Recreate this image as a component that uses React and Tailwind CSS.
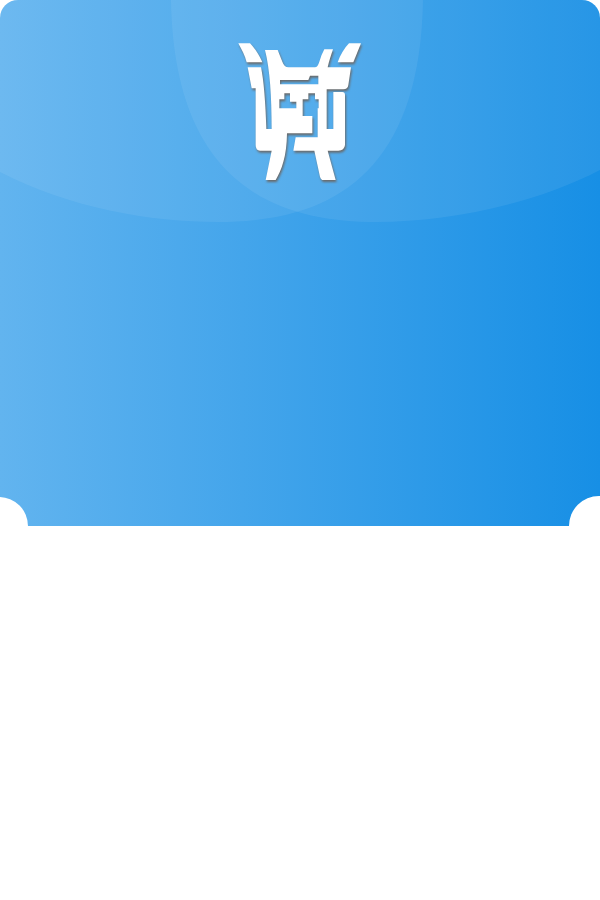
import React from "react";

const Logo = () => (
  <svg
    viewBox="0 0 450 480"
    className="w-[150px] h-[160px] drop-shadow-[1.5px_2px_1px_#6a6a6a]"
    fill="#ffffff"
  >
    {/* horns */}
    <path d="M40 40 H75 C90 55 104 78 112 97 H65 C60 75 50 60 40 40Z" />
    <path d="M372 40 H408 L385 97 H338 C345 75 358 55 372 40Z" />
    {/* body, traced clockwise, with the two inner holes */}
    <path
      fillRule="evenodd"
      d="M68 112 H108 C116 150 122 220 124 297 H140 C140 200 135 120 120 60 H158 L172 95 Q178 112 190 112 H270 Q278 112 283 95 Q290 72 298 58 H324 C318 75 312 95 308 112 H378 L370 165 Q368 178 355 178 H305 V297 H325 V186 H352 Q360 186 360 195 V345 Q358 362 340 362 H308 L332 450 H295 Q288 450 285 440 L268 362 H205 L212 322 H278 V235 H281 V208 H270 V190 H250 V208 H233 V258 H262 V310 H186 C185 380 170 420 152 450 H122 L140 362 H105 Q92 362 92 345 V175 H80 L68 112Z
         M165 150 H250 L255 137 H280 V163 H165Z
         M163 208 H178 V190 H195 V215 H214 V235 H163Z"
    />
  </svg>
);

const App = () => {
  return (
    <div className="min-h-[900px] bg-white">
      <div className="relative h-[526px] overflow-hidden rounded-t-[18px] bg-linear-to-r/srgb from-[#62b4ef] to-[#178fe5]">
        {/* two pale lobes behind the logo */}
        <svg
          viewBox="0 0 600 526"
          className="absolute left-0 top-0 w-[600px] h-[526px]"
          fill="#ffffff"
          fillOpacity="0.07"
        >
          <path d="M0 0 V172 C70 208 150 222 218 222 C330 222 420 175 423 0Z" />
          <path d="M600 0 V170 C530 206 445 222 377 222 C265 222 174 175 171 0Z" />
        </svg>

        <div className="relative flex justify-center pt-[30px]">
          <Logo />
        </div>

        {/* ticket notches */}
        <div className="absolute left-[-30px] bottom-[-29px] w-[58px] h-[58px] rounded-full bg-white"></div>
        <div className="absolute right-[-31px] bottom-[-30px] w-[62px] h-[60px] rounded-full bg-white"></div>
      </div>
    </div>
  );
};

export default App;
